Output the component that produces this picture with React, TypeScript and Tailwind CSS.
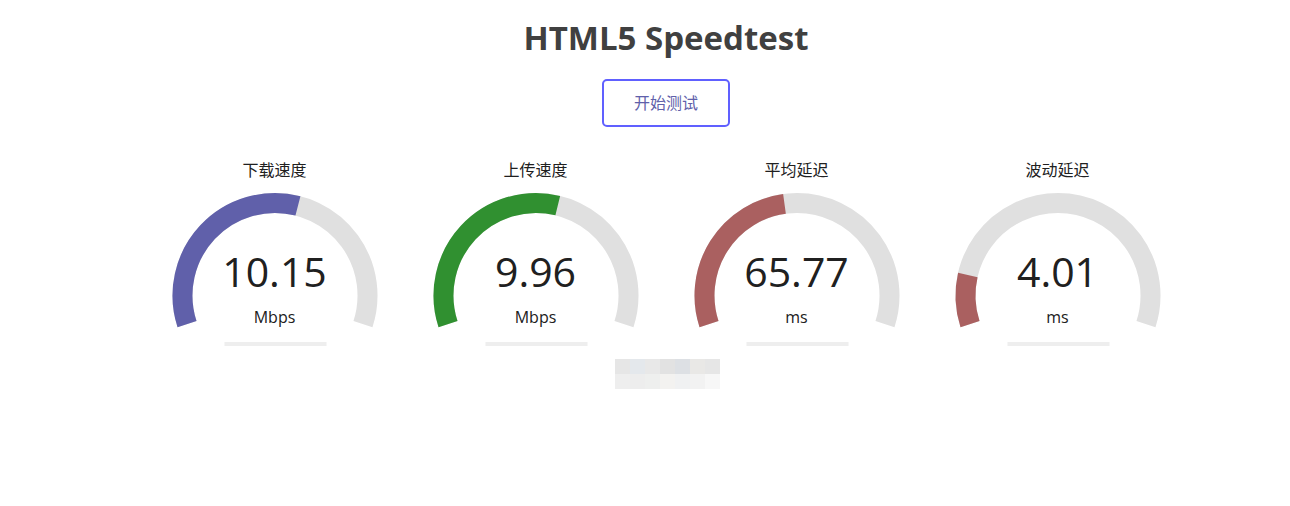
import React from 'react';

type Meter = {
  name: string;
  value: string;
  unit: string;
  amount: number;
  color: string;
};

const meters: Meter[] = [
  { name: '下载速度', value: '10.15', unit: 'Mbps', amount: 0.5665, color: '#6060AA' },
  { name: '上传速度', value: '9.96', unit: 'Mbps', amount: 0.563, color: '#309030' },
  { name: '平均延迟', value: '65.77', unit: 'ms', amount: 0.464, color: '#AA6060' },
  { name: '波动延迟', value: '4.01', unit: 'ms', amount: 0.1428, color: '#AA6060' },
];

// canvas-style arc: start at -1.1π, clockwise
const arcPath = (cx: number, cy: number, r: number, a0: number, a1: number) => {
  const x0 = cx + r * Math.cos(a0);
  const y0 = cy + r * Math.sin(a0);
  const x1 = cx + r * Math.cos(a1);
  const y1 = cy + r * Math.sin(a1);
  const large = a1 - a0 > Math.PI ? 1 : 0;
  return `M ${x0} ${y0} A ${r} ${r} 0 ${large} 1 ${x1} ${y1}`;
};

const Gauge: React.FC<{ m: Meter }> = ({ m }) => {
  const cx = 128;
  const cy = 145.5;
  const r = 92.5;
  const start = -Math.PI * 1.1;
  const end = Math.PI * 0.1;
  const fillEnd = start + m.amount * Math.PI * 1.2;
  return (
    <div className="relative w-[256px] h-[200px]">
      <svg className="absolute inset-0" width="256" height="200" viewBox="0 0 256 200">
        <path d={arcPath(cx, cy, r, start, end)} fill="none" stroke="#E0E0E0" strokeWidth="20" />
        <path d={arcPath(cx, cy, r, start, fillEnd)} fill="none" stroke={m.color} strokeWidth="20" />
        <rect x="77.5" y="192" width="102" height="4" fill="#EEEEEE" />
      </svg>
      <div className="relative flex flex-col items-center">
        <div className="mt-[10px] text-[16px] leading-[20px] text-[#202020]">{m.name}</div>
        <div className="mt-[67px] text-[41px] leading-[48px] text-[#202020]">{m.value}</div>
        <div className="mt-[12px] text-[16px] leading-[20px] text-[#202020]">{m.unit}</div>
      </div>
    </div>
  );
};

const mosaicTop = ['#e6e6e6', '#e4e8ec', '#e8e8e8', '#e2e2e2', '#dde0e4', '#e9e8e6', '#e6e6e6'];
const mosaicBottom = ['#eeeeee', '#ededed', '#eeefee', '#f3f2f0', '#f0f1f2', '#f2f2f2', '#f7f7f7'];

const App: React.FC = () => {
  return (
    <div
      className="w-[1290px] h-[506px] bg-white pl-[42px] flex flex-col items-center"
      style={{ fontFamily: '"Open Sans", "Noto Sans CJK SC", sans-serif' }}
    >
      <h1 className="mt-[16px] text-[33px] leading-[44px] font-bold text-[#404040]">HTML5 Speedtest</h1>
      <button className="mt-[19px] w-[128px] h-[48px] border-[2px] border-[#6060FF] rounded-[5px] text-[16px] text-[#6060AA]">
        开始测试
      </button>
      <div className="mt-[23px] flex gap-[5px]">
        {meters.map((m) => (
          <Gauge key={m.name} m={m} />
        ))}
      </div>
      <div className="mt-[9px] ml-[3px] flex flex-col">
        <div className="flex">
          {mosaicTop.map((c, i) => (
            <div key={i} className="w-[15px] h-[15px]" style={{ backgroundColor: c }} />
          ))}
        </div>
        <div className="flex">
          {mosaicBottom.map((c, i) => (
            <div key={i} className="w-[15px] h-[15px]" style={{ backgroundColor: c }} />
          ))}
        </div>
      </div>
    </div>
  );
};

export default App;
